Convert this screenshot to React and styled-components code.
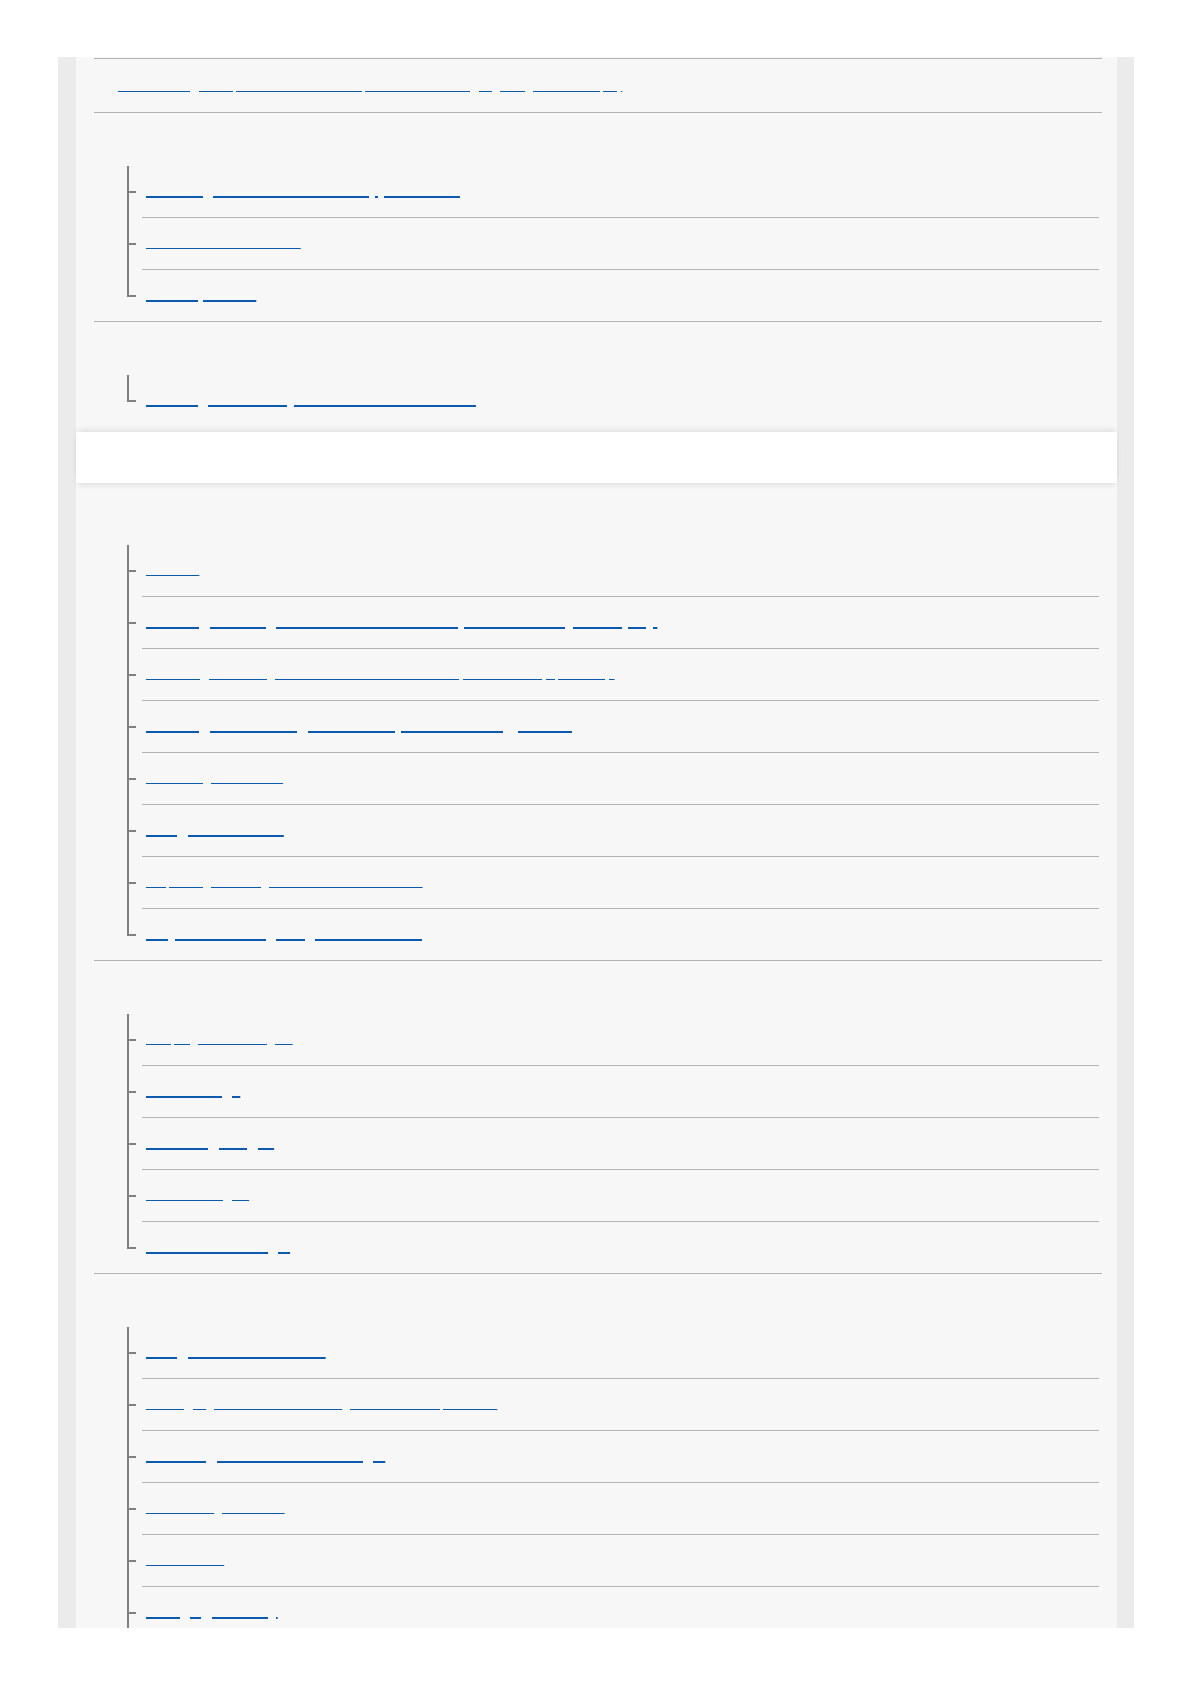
import React from 'react';
import styled, { createGlobalStyle } from 'styled-components';

const GlobalStyle = createGlobalStyle`
  html, body {
    margin: 0;
    padding: 0;
    background: #fff;
  }
  body {
    font-family: "Liberation Sans", Arial, sans-serif;
  }
  * {
    box-sizing: border-box;
  }
`;

const Page = styled.div`
  padding: 57px 0 0 58px;
`;

// gray frame, cut off at the page bottom
const Frame = styled.div`
  width: 1076px;
  height: 1571px;
  overflow: hidden;
  background: #ebebeb;
  padding: 0 17px 0 18px;
  display: flex;
  flex-direction: column;
`;

const Panel = styled.div`
  background: #f7f7f7;
  padding: ${p => p.$padTop}px 15px ${p => p.$padBottom}px 18px;
`;

const Band = styled.div`
  height: 51px;
  background: #fff;
  position: relative;
  z-index: 1;
  box-shadow: 0 -4px 6px -2px rgba(0, 0, 0, 0.1), 0 4px 6px -2px rgba(0, 0, 0, 0.1);
  padding-left: 24px;
  line-height: 51px;
  font-size: 18px;
  color: transparent;
`;

const TopItem = styled.div`
  border-top: 1px solid #b3b3b3;
  border-bottom: 1px solid #b3b3b3;
  padding: 16px 0 17px 24px;
  line-height: 20px;
`;

const Section = styled.section`
  border-bottom: ${p => (p.$last ? 'none' : '1px solid #b3b3b3')};
`;

const Heading = styled.h3`
  margin: 0;
  height: 53px;
  padding-left: 24px;
  line-height: 53px;
  font-size: 18px;
  font-weight: normal;
  color: transparent;
`;

const Tree = styled.ul`
  list-style: none;
  margin: 0 3px 0 48px;
  padding: 0;
`;

// $open: the list goes on past the page edge, so the last row keeps the full line
const Item = styled.li`
  position: relative;
  height: 52px;
  padding: 14px 0 17px 4px;
  line-height: 20px;
  border-bottom: 1px solid #b3b3b3;

  &::before {
    content: '';
    position: absolute;
    left: -15px;
    top: 0;
    bottom: -1px;
    width: 2px;
    background: #808080;
  }

  &::after {
    content: '';
    position: absolute;
    left: -15px;
    top: 25px;
    width: 9px;
    height: 2px;
    background: #808080;
  }

  &:last-child {
    height: 51px;
    border-bottom: none;
  }

  &:last-child::before {
    bottom: ${p => (p.$open ? '-40px' : 'auto')};
    height: ${p => (p.$open ? 'auto' : '27px')};
  }
`;

const Link = styled.a`
  font-size: 16px;
  color: transparent;
  text-decoration-line: underline;
  text-decoration-color: #0c5aad;
  text-decoration-thickness: ${p => (p.$thick ? 2 : 1)}px;
  text-decoration-skip-ink: auto;
  white-space: nowrap;
`;

const topLink = 'Connecting this product to a smartphone with Imaging Edge Mobile (...)';

const firstPanel = [
  {
    title: 'Getting started',
    items: [
      ['Checking the camera and all supplied items.', true],
      ['Parts identification list', false],
      ['Basic operation', true],
    ],
  },
  {
    title: 'Preparing the camera',
    items: [['Inserting the memory card into the camera slot', true]],
  },
];

const secondPanel = [
  {
    title: 'Shooting',
    items: [
      ['Monitor', false],
      ['Shooting still images with the shutter button pressed halfway down (AF).', true],
      ['Shooting still images with the shutter button pressed fully (AE/AF).', false],
      ['Shooting movies using the MOVIE (movie recording) button.', true],
      ['Selecting the mode', false],
      ['Using the self-timer', true],
      ['Adjusting the brightness of the monitor.', false],
      ['Playback: Viewing images on a TV set.', true],
    ],
  },
  {
    title: 'Viewing',
    items: [
      ['Playing back images', false],
      ['Delete image', true],
      ['Protecting images', true],
      ['Rotate images', false],
      ['Slide Show settings.', true],
    ],
  },
  {
    title: 'Changing settings',
    open: true,
    items: [
      ['Using the MENU screens', true],
      ['Changing the camera settings in the Setup menu.', false],
      ['Initializing all the camera settings.', true],
      ['Formatting the card', false],
      ['File names', false],
      ['Charging a battery', true],
    ],
  },
];

const TreeSection = ({ section, last }) => (
  <Section $last={last}>
    <Heading>{section.title}</Heading>
    <Tree>
      {section.items.map(([text, thick]) => (
        <Item key={text} $open={section.open}>
          <Link href="#" $thick={thick}>{text}</Link>
        </Item>
      ))}
    </Tree>
  </Section>
);

export default function App() {
  return (
    <Page>
      <GlobalStyle />
      <Frame>
        <Panel $padTop={1} $padBottom={6}>
          <TopItem>
            <Link href="#">{topLink}</Link>
          </TopItem>
          {firstPanel.map((s, i) => (
            <TreeSection key={s.title} section={s} last={i === firstPanel.length - 1} />
          ))}
        </Panel>
        <Band>Help Guide</Band>
        <Panel $padTop={9} $padBottom={0}>
          {secondPanel.map((s, i) => (
            <TreeSection key={s.title} section={s} last={i === secondPanel.length - 1} />
          ))}
        </Panel>
      </Frame>
    </Page>
  );
}
